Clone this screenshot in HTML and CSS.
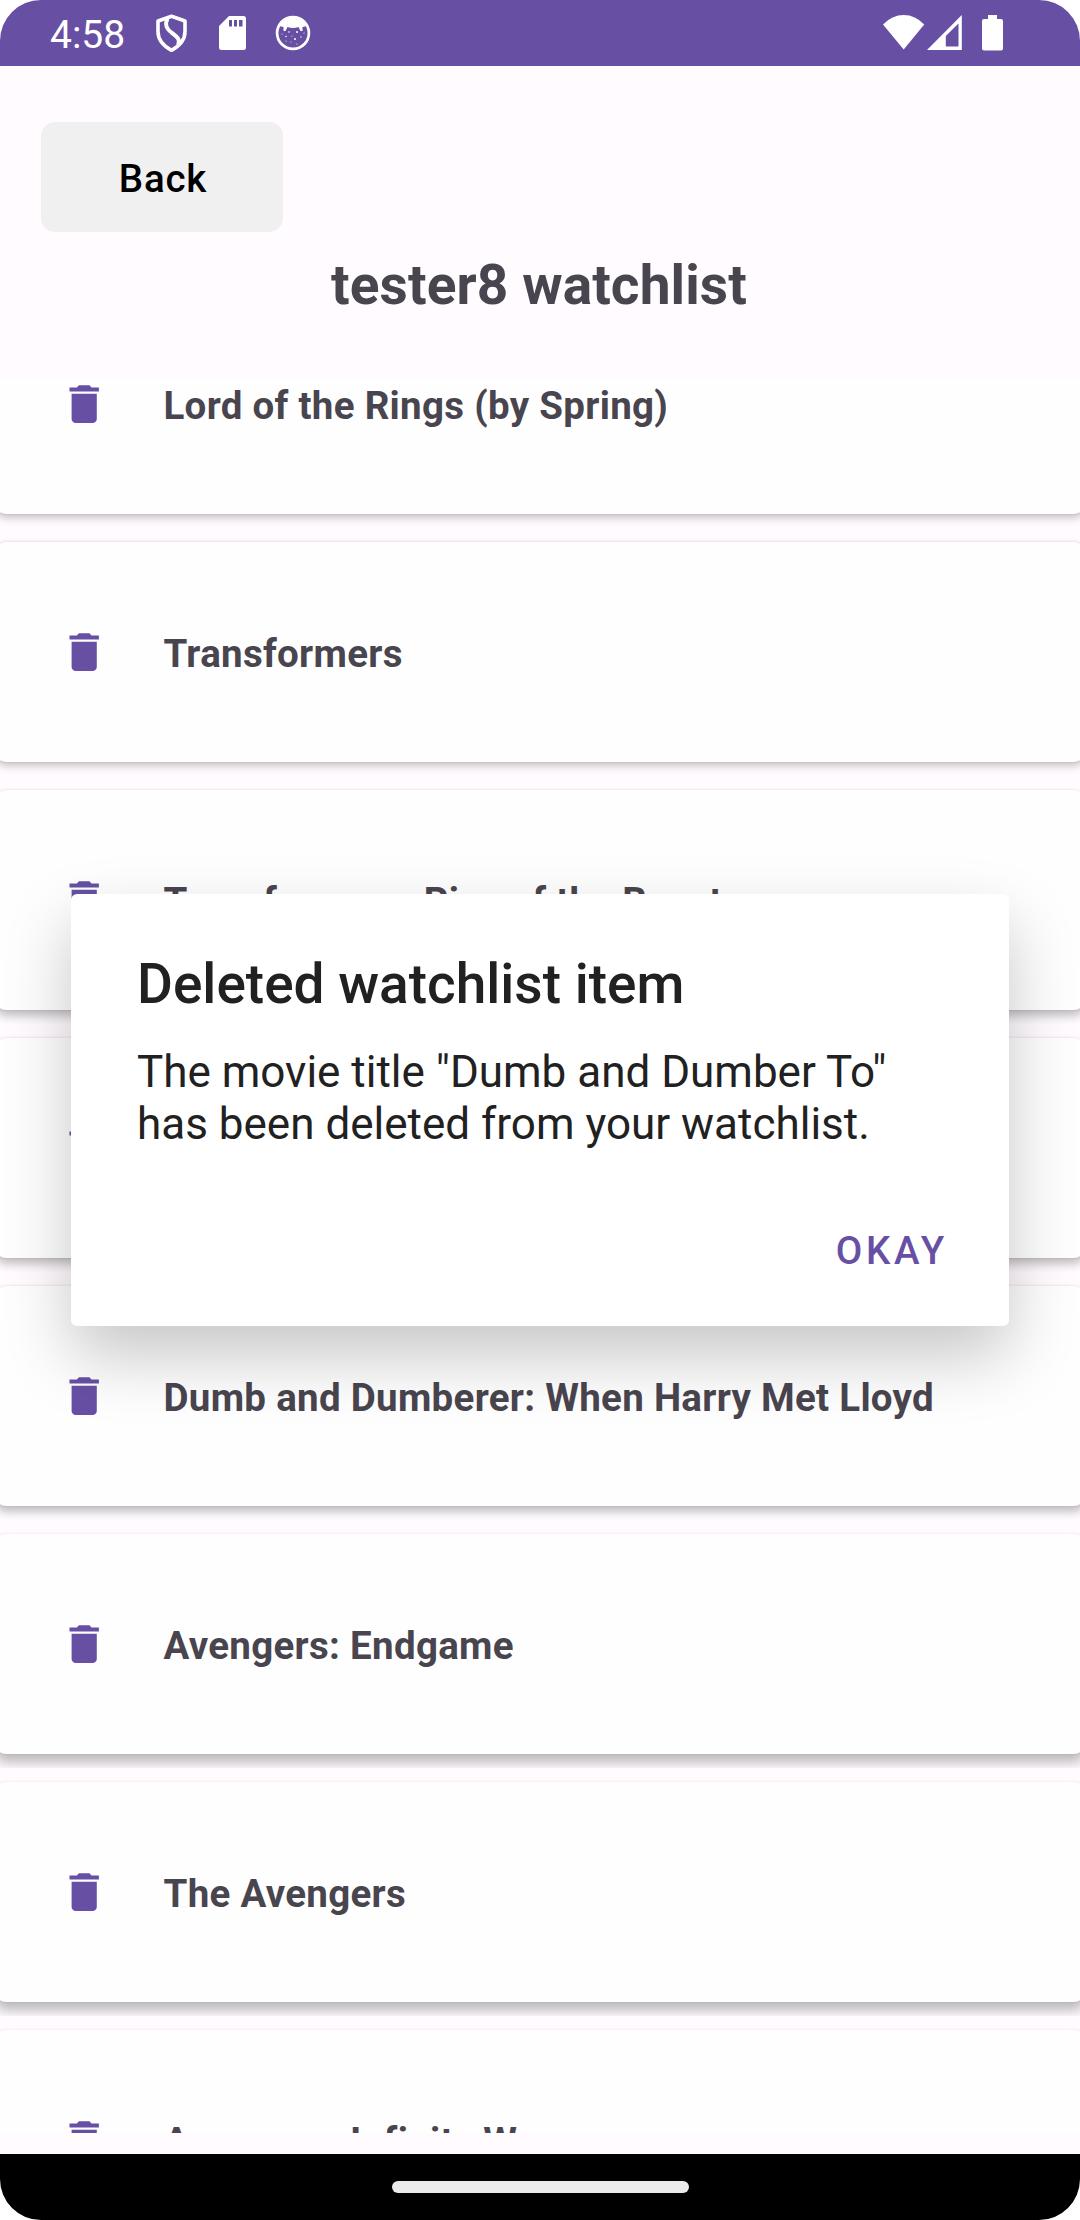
FILE: index.html
```html
<!DOCTYPE html>
<html lang="en">
<head>
<meta charset="utf-8">
<title>Watchlist</title>
<link rel="stylesheet" href="styles.css">
</head>
<body>
<svg class="sprite" width="0" height="0">
  <symbol id="trash" viewBox="0 0 24 24"><path d="M19 4H15.500L14.500 3H9.500L8.500 4H5V6H19M6 19A2 2 0 0 0 8 21H16A2 2 0 0 0 18 19V7H6V19Z"/></symbol>
</svg>
<div class="phone">
  <header class="status">
    <span class="clock">4:58</span>
    <svg class="shield" width="33" height="39" viewBox="0 0 33 39" fill="none" stroke="#fff" stroke-linejoin="round">
      <path stroke-width="3.600" d="M16.500 2.300 30 7V17.500C30 25.500 24.500 32 16.500 36.300C8.500 32 3 25.500 3 17.500V7Z"/>
      <path stroke-width="4" d="M12.500 4.500C9.500 10.500 11 14.500 17 19C24 24 25 26.500 23 31"/>
    </svg>
    <svg class="sd" width="27" height="35" viewBox="0 0 27 35" fill="#fff">
      <path fill-rule="evenodd" d="M10 0H24.500Q27 0 27 2.500V31.500Q27 34 24.500 34H2.500Q0 34 0 31.500V10ZM10 4V10.500H13V4ZM15 4V10.500H18V4ZM20 4V10.500H23.500V4Z"/>
    </svg>
    <svg class="cat" width="36" height="36" viewBox="0 0 36 36">
      <circle cx="18" cy="18" r="15.900" fill="none" stroke="#fff" stroke-width="2.700"/>
      <path fill="#fff" d="M4 11Q9 2 18 2T32 11L27.500 12 27.500 16 25.500 16 23.500 12Q18 14 12.500 12L10.500 16 8.500 16 8.500 12Z"/>
      <g fill="#fff"><circle cx="14" cy="17" r=".8"/><circle cx="22" cy="17" r="1"/><circle cx="11" cy="21.500" r=".8"/><circle cx="20" cy="24" r="1"/><circle cx="26" cy="22" r=".7"/><circle cx="7" cy="19" r=".5"/><circle cx="16" cy="27" r=".5"/><circle cx="29" cy="18" r=".5"/><circle cx="17" cy="21" r=".5"/><circle cx="22" cy="29" r=".6"/><circle cx="11" cy="26" r=".5"/></g>
    </svg>
    <svg class="wifi" width="42" height="35" viewBox="0 0 42 35"><path fill="#fff" d="M0 9.500Q9 0 20.700 0T41.200 9.500L20.700 34.500Z"/></svg>
    <svg class="signal" width="35" height="35" viewBox="0 0 35 35"><path fill="#fff" fill-rule="evenodd" d="M0 35 34.800 0V35ZM18.800 21V31.500H31.500V8.500Z"/></svg>
    <svg class="battery" width="21" height="36" viewBox="0 0 21 36"><path fill="#fff" d="M6 0H15V4H19Q21 4 21 6V33.500Q21 35.500 19 35.500H2Q0 35.500 0 33.500V6Q0 4 2 4H6Z"/></svg>
  </header>

  <main class="screen">
    <button class="back">Back</button>
    <h1 class="title">tester8 watchlist</h1>
    <div class="list">
      <ul class="items">
        <li class="row"><div class="card"><svg class="icon"><use href="#trash"/></svg><span>Lord of the Rings (by Spring)</span></div></li>
        <li class="row"><div class="card"><svg class="icon"><use href="#trash"/></svg><span>Transformers</span></div></li>
        <li class="row mid"><div class="card"><svg class="icon"><use href="#trash"/></svg><span>Transformers: Rise of the Beasts</span></div></li>
        <li class="row mid"><div class="card"><svg class="icon"><use href="#trash"/></svg></div></li>
        <li class="row mid"><div class="card"><svg class="icon"><use href="#trash"/></svg><span>Dumb and Dumberer: When Harry Met Lloyd</span></div></li>
        <li class="row low"><div class="card"><svg class="icon"><use href="#trash"/></svg><span>Avengers: Endgame</span></div></li>
        <li class="row low"><div class="card"><svg class="icon"><use href="#trash"/></svg><span>The Avengers</span></div></li>
        <li class="row low"><div class="card"><svg class="icon"><use href="#trash"/></svg><span>Avengers: Infinity War</span></div></li>
      </ul>
    </div>
  </main>

  <nav class="navbar"><span class="handle"></span></nav>

  <div class="dialog" role="alertdialog">
    <h2 class="dialog-title">Deleted watchlist item</h2>
    <p class="message">The movie title "Dumb and Dumber To"<br>has been deleted from your watchlist.</p>
    <button class="okay">OKAY</button>
  </div>
</div>
</body>
</html>
```
FILE: styles.css
```css
* { box-sizing: border-box; }
body {
  margin: 0;
  background: #fff;
  font-family: Roboto, sans-serif;
}
h1, h2, p, ul { margin: 0; padding: 0; }
button { border: 0; font-family: inherit; }
.sprite { display: block; }

.phone {
  position: relative;
  display: flex;
  flex-direction: column;
  width: 1080px;
  height: 2220px;
  overflow: hidden;
  border-radius: 41px;
  background: #fffbff;
}

/* Status bar */
.status {
  display: flex;
  flex: none;
  align-items: flex-start;
  height: 66px;
  padding: 15px 77px 0 50px;
  background: #6750a4;
  color: #fff;
}
.clock {
  width: 105px;
  margin-top: -3px;
  font-size: 39px;
  line-height: 46px;
}
.shield { margin-top: -1px; }
.sd { margin: 1px 29px 0 31px; }
.wifi { margin: 0 2px 0 auto; }
.battery { margin-left: 20px; }

/* Watchlist screen */
.screen {
  display: flex;
  flex: none;
  flex-direction: column;
  height: 2088px;
  padding: 56px 0 21px;
}
.back {
  width: 242px;
  height: 110px;
  margin-left: 41px;
  padding: 2px 0 0 2px;
  border-radius: 14px;
  background: #f0f0f0;
  color: #000;
  font-size: 38.5px;
  font-weight: 500;
  letter-spacing: 0.8px;
}
.title {
  margin-top: 21px;
  padding-right: 2px;
  color: #49454f;
  font-size: 55px;
  font-weight: 700;
  line-height: 64px;
  letter-spacing: 0.1px;
  text-align: center;
}
.list {
  flex: 1;
  min-height: 0;
  margin-top: 63px;
  overflow: hidden;
}
.items {
  margin-top: -100px;
  list-style: none;
}
.row {
  height: 248px;
  padding: 14px 0;
  overflow: hidden;
}
.card {
  display: flex;
  align-items: center;
  height: 220px;
  margin: 0 -5px;
  padding-left: 63.6px;
  border-radius: 11px;
  background: #fefefe;
  box-shadow: 0 4px 8px rgba(0, 0, 0, 0.22), 0 0 3px rgba(0, 0, 0, 0.12);
  color: #49454f;
  font-size: 38.5px;
  font-weight: 700;
  letter-spacing: 0.3px;
}
.mid .card { box-shadow: 0 6px 10px rgba(0, 0, 0, 0.24), 0 0 3px rgba(0, 0, 0, 0.1); }
.low .card { box-shadow: 0 9px 12px rgba(0, 0, 0, 0.25), 0 0 3px rgba(0, 0, 0, 0.08); }
.card span { padding-top: 3px; }
.icon {
  width: 50.4px;
  height: 50.4px;
  margin-right: 54.5px;
  fill: #6750a4;
}

/* Gesture navigation */
.navbar {
  display: flex;
  flex: none;
  justify-content: center;
  height: 66px;
  padding-top: 27px;
  background: #000;
}
.handle {
  width: 297px;
  height: 12px;
  border-radius: 6px;
  background: #ebebeb;
}

/* Alert */
.dialog {
  position: absolute;
  top: 894px;
  left: 71px;
  display: flex;
  flex-direction: column;
  width: 938px;
  height: 432px;
  padding: 58px 61px 0 66px;
  border-radius: 6px;
  background: #fff;
  box-shadow: 0 30px 66px rgba(0, 0, 0, 0.22);
  color: #212121;
}
.dialog-title {
  font-size: 55px;
  font-weight: 500;
  line-height: 64px;
}
.message {
  margin-top: 30px;
  font-size: 44px;
  line-height: 52px;
}
.okay {
  align-self: flex-end;
  margin-top: 78px;
  padding: 0;
  background: none;
  color: #6750a4;
  font-size: 38.5px;
  font-weight: 500;
  line-height: 45px;
  letter-spacing: 3.6px;
}
```
